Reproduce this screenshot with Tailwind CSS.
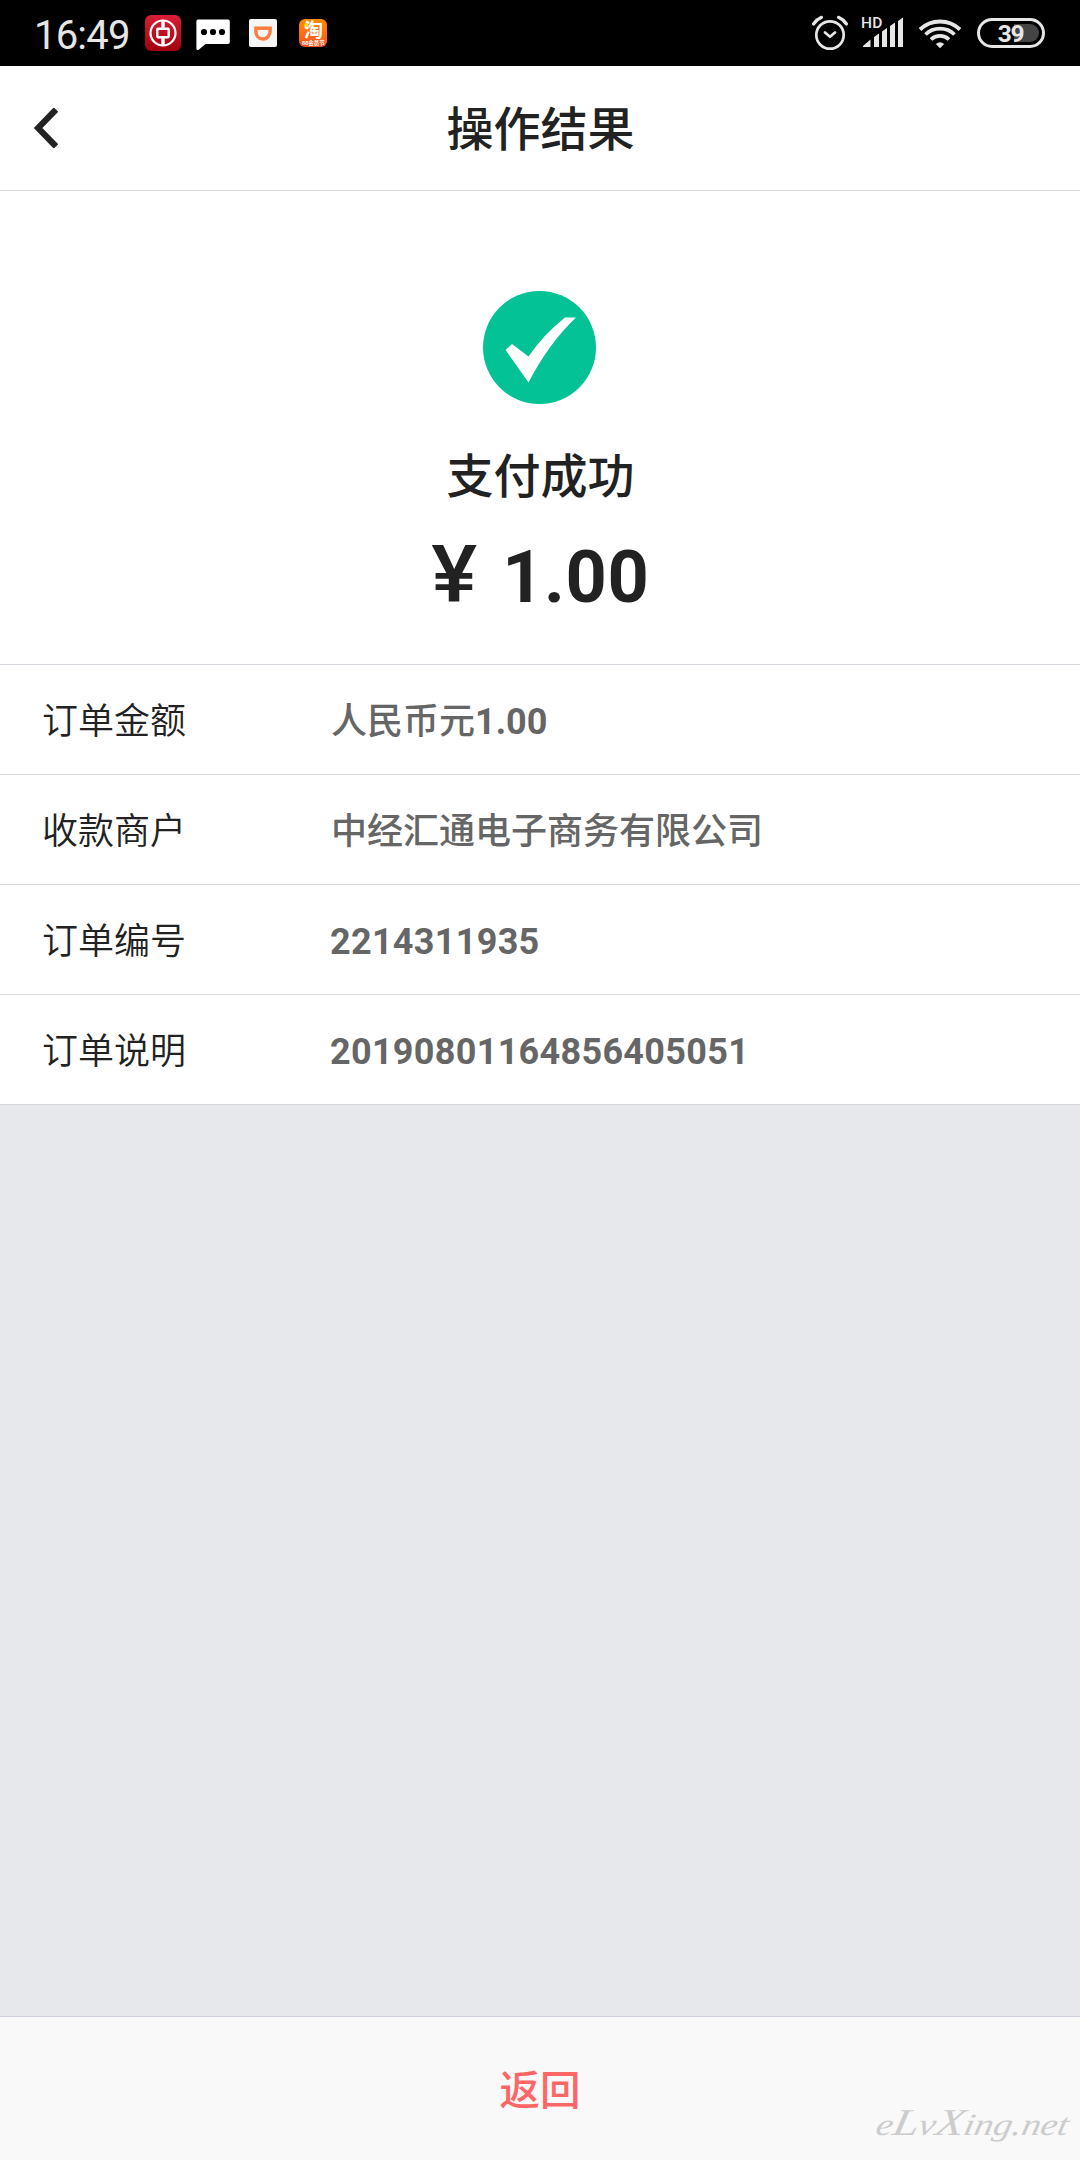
<!DOCTYPE html>
<html lang="zh-CN">
<head>
    <meta charset="UTF-8">
    <meta name="viewport" content="width=device-width, initial-scale=1.0">
    <title>操作结果</title>
    <script src="https://cdn.jsdelivr.net/npm/@tailwindcss/browser@4"></script>
</head>
<body class="bg-[#e7e8ec] h-[2160px] w-[1080px] flex flex-col overflow-hidden text-[#222] font-[Roboto,'Noto_Sans_CJK_SC',sans-serif]">

    <!-- Status bar -->
    <div class="h-[66px] shrink-0 bg-black flex items-center justify-between pl-[34px] pr-[35px] text-[#e6e6e6]">
        <div class="flex items-center">
            <span class="w-[111px] text-[40px] leading-none tracking-[-0.8px] pt-1.5">16:49</span>
            <svg class="w-9 h-9" viewBox="0 0 36 36" fill="none">
                <defs>
                    <linearGradient id="bank" x1="0" y1="0" x2="0" y2="1">
                        <stop offset="0" stop-color="#d81f35"/>
                        <stop offset="1" stop-color="#a1000c"/>
                    </linearGradient>
                </defs>
                <rect width="36" height="36" rx="6" fill="url(#bank)"/>
                <circle cx="18" cy="18" r="12.5" stroke="#fff" stroke-width="2.2"/>
                <path d="M18 5.5v8M18 22.5v8" stroke="#fff" stroke-width="3.4"/>
                <rect x="12.3" y="13.8" width="11.4" height="8.4" rx="0.6" stroke="#fff" stroke-width="2.4"/>
            </svg>
            <svg class="ml-[15px] mt-1 w-[34px] h-8" viewBox="0 0 34 32">
                <path d="M2 0.5h30a1.8 1.8 0 0 1 1.8 1.8v21a1.8 1.8 0 0 1-1.8 1.8H9.5L3 30.6q-2.3 1.4-2.6-1V2.3A1.8 1.8 0 0 1 2 .5z" fill="#fff"/>
                <circle cx="8" cy="13" r="3.1"/>
                <circle cx="17" cy="13" r="3.1"/>
                <circle cx="26" cy="13" r="3.1"/>
            </svg>
            <svg class="ml-[19px] w-7 h-7" viewBox="0 0 28 28">
                <rect width="28" height="28" rx="2" fill="#f5f5f5"/>
                <path d="M6.8 9.2h14.4v1.8c0 5-2.8 9-7.2 9s-7.2-3.5-7.2-8z" fill="none" stroke="#ff7d41" stroke-width="3.4"/>
            </svg>
            <div class="relative ml-[22px] w-7 h-7 rounded-md overflow-hidden bg-linear-to-b from-[#ff8a00] to-[#ff4d1c] text-white">
                <span class="absolute left-[5px] top-1 w-1 h-1 rounded-full bg-[#ffe600]"></span>
                <span class="absolute left-[5px] top-[2px] text-[19px] leading-[19px] font-bold">淘</span>
                <span class="absolute left-[3px] top-[21px] text-[5.5px] leading-[6px] font-bold">88会员节</span>
            </div>
        </div>
        <svg class="w-[234px] h-[66px]" viewBox="811 0 234 66" fill="none" stroke="#e6e6e6">
            <circle cx="830" cy="35" r="13.7" stroke-width="2.7"/>
            <path d="M825 32.5l5 4.3 5-4.3" stroke-width="2.7" stroke-linecap="round" stroke-linejoin="round"/>
            <path d="M813.5 24q3-4.5 8-6.7M846.5 24q-3-4.5-8-6.7" stroke-width="3.2" stroke-linecap="round"/>
            <text x="861" y="27.8" class="font-[Roboto] text-[15.5px] font-medium tracking-[0.3px]" fill="#e6e6e6" stroke="none">HD</text>
            <path d="M863 46l7.5-6.5v7.5h-7.5zM874 37l5-3.5V47h-5zM882 31.5l5-3.5v19h-5zM890 26l5-3.5V47h-5zM898 21l5-3.5V47h-5z" fill="#e6e6e6" stroke="none"/>
            <path d="M920 29.5a29 29 0 0 1 40 0M925.5 34.5a21 21 0 0 1 29 0M931 39.5a13 13 0 0 1 18 0" stroke-width="3.8"/>
            <path d="M935.8 44q4.2-3.5 8.4 0l-4.2 4.2z" fill="#e6e6e6" stroke="none"/>
            <path d="M1014 24h16a9 9 0 0 1 0 18h-16z" fill="#444" stroke="none"/>
            <rect x="978.5" y="19.5" width="65" height="27" rx="13.5" stroke-width="3"/>
            <text x="1010.5" y="41.8" text-anchor="middle" class="font-[Roboto] text-[24.5px] font-bold tracking-[-1.4px]" fill="#e6e6e6" stroke="none">39</text>
        </svg>
    </div>

    <!-- Title bar -->
    <div class="relative h-[125px] shrink-0 bg-white border-b border-[#d5d5dc] flex items-center justify-center pt-1">
        <svg class="absolute left-[34px] top-[42px] w-6 h-10" viewBox="0 0 24 40" fill="none">
            <path d="M22 1.5L4 20l18 18.5" stroke="#222" stroke-width="6.2"/>
        </svg>
        <h1 class="pl-px text-[47px] leading-[60px] font-medium">操作结果</h1>
    </div>

    <!-- Result -->
    <div class="h-[474px] shrink-0 bg-white border-b border-[#d5d5dc] flex flex-col items-center pt-[100px]">
        <svg class="w-[114px] h-[114px]" viewBox="0 0 114 114">
            <circle cx="56.5" cy="56.5" r="56.5" fill="#03c295"/>
            <path d="M22.5 59l6.5-6 16.5 12.5Q61 43 82 26.5h11Q66 52 45.5 91.5z" fill="#fff"/>
        </svg>
        <p class="mt-[42px] pl-px text-[47px] leading-[60px] font-medium">支付成功</p>
        <p class="mt-[28px] h-[80px] pl-0.5 flex items-baseline gap-[27px] leading-[80px] text-[72px] font-bold">
            <span class="inline-block scale-x-108 text-[80px] font-medium">¥</span>
            <span class="tracking-[0.6px]">1.00</span>
        </p>
    </div>

    <!-- Order details -->
    <dl class="shrink-0 bg-white text-[36px] leading-[50px]">
        <div class="h-[110px] flex items-center border-b border-[#d5d5dc] pl-[42px] pt-[5px]">
            <dt class="w-[289px] font-[350]">订单金额</dt>
            <dd class="font-bold text-[#666]"><span class="font-medium">人民币元</span>1.00</dd>
        </div>
        <div class="h-[110px] flex items-center border-b border-[#d5d5dc] pl-[42px] pt-[5px]">
            <dt class="w-[289px] font-[350]">收款商户</dt>
            <dd class="font-medium text-[#666]">中经汇通电子商务有限公司</dd>
        </div>
        <div class="h-[110px] flex items-center border-b border-[#d5d5dc] pl-[42px] pt-[5px]">
            <dt class="w-[288px] font-[350]">订单编号</dt>
            <dd class="font-bold tracking-[0.3px] text-[#666]">2214311935</dd>
        </div>
        <div class="h-[110px] flex items-center border-b border-[#d5d5dc] pl-[42px] pt-[5px]">
            <dt class="w-[288px] font-[350]">订单说明</dt>
            <dd class="font-bold tracking-[0.3px] text-[#666]">20190801164856405051</dd>
        </div>
    </dl>

    <!-- Footer -->
    <div class="relative mt-auto h-36 shrink-0 bg-[#f9f9f9] border-t border-[#d0d0dc] flex items-center justify-center pt-1">
        <button class="text-[40.5px] leading-[56px] font-medium text-[#ff6666]">返回</button>
        <svg class="absolute right-0 bottom-0 w-[220px] h-[70px]" viewBox="0 0 220 70">
            <text x="0" y="45" textLength="192" lengthAdjust="spacingAndGlyphs" transform="translate(24) skewX(-12)" class="font-['Liberation_Serif'] italic text-[31px]" fill="#ccc">e<tspan class="text-[38px]">L</tspan>v<tspan class="text-[38px]">X</tspan>ing.net</text>
        </svg>
    </div>
</body>
</html>
